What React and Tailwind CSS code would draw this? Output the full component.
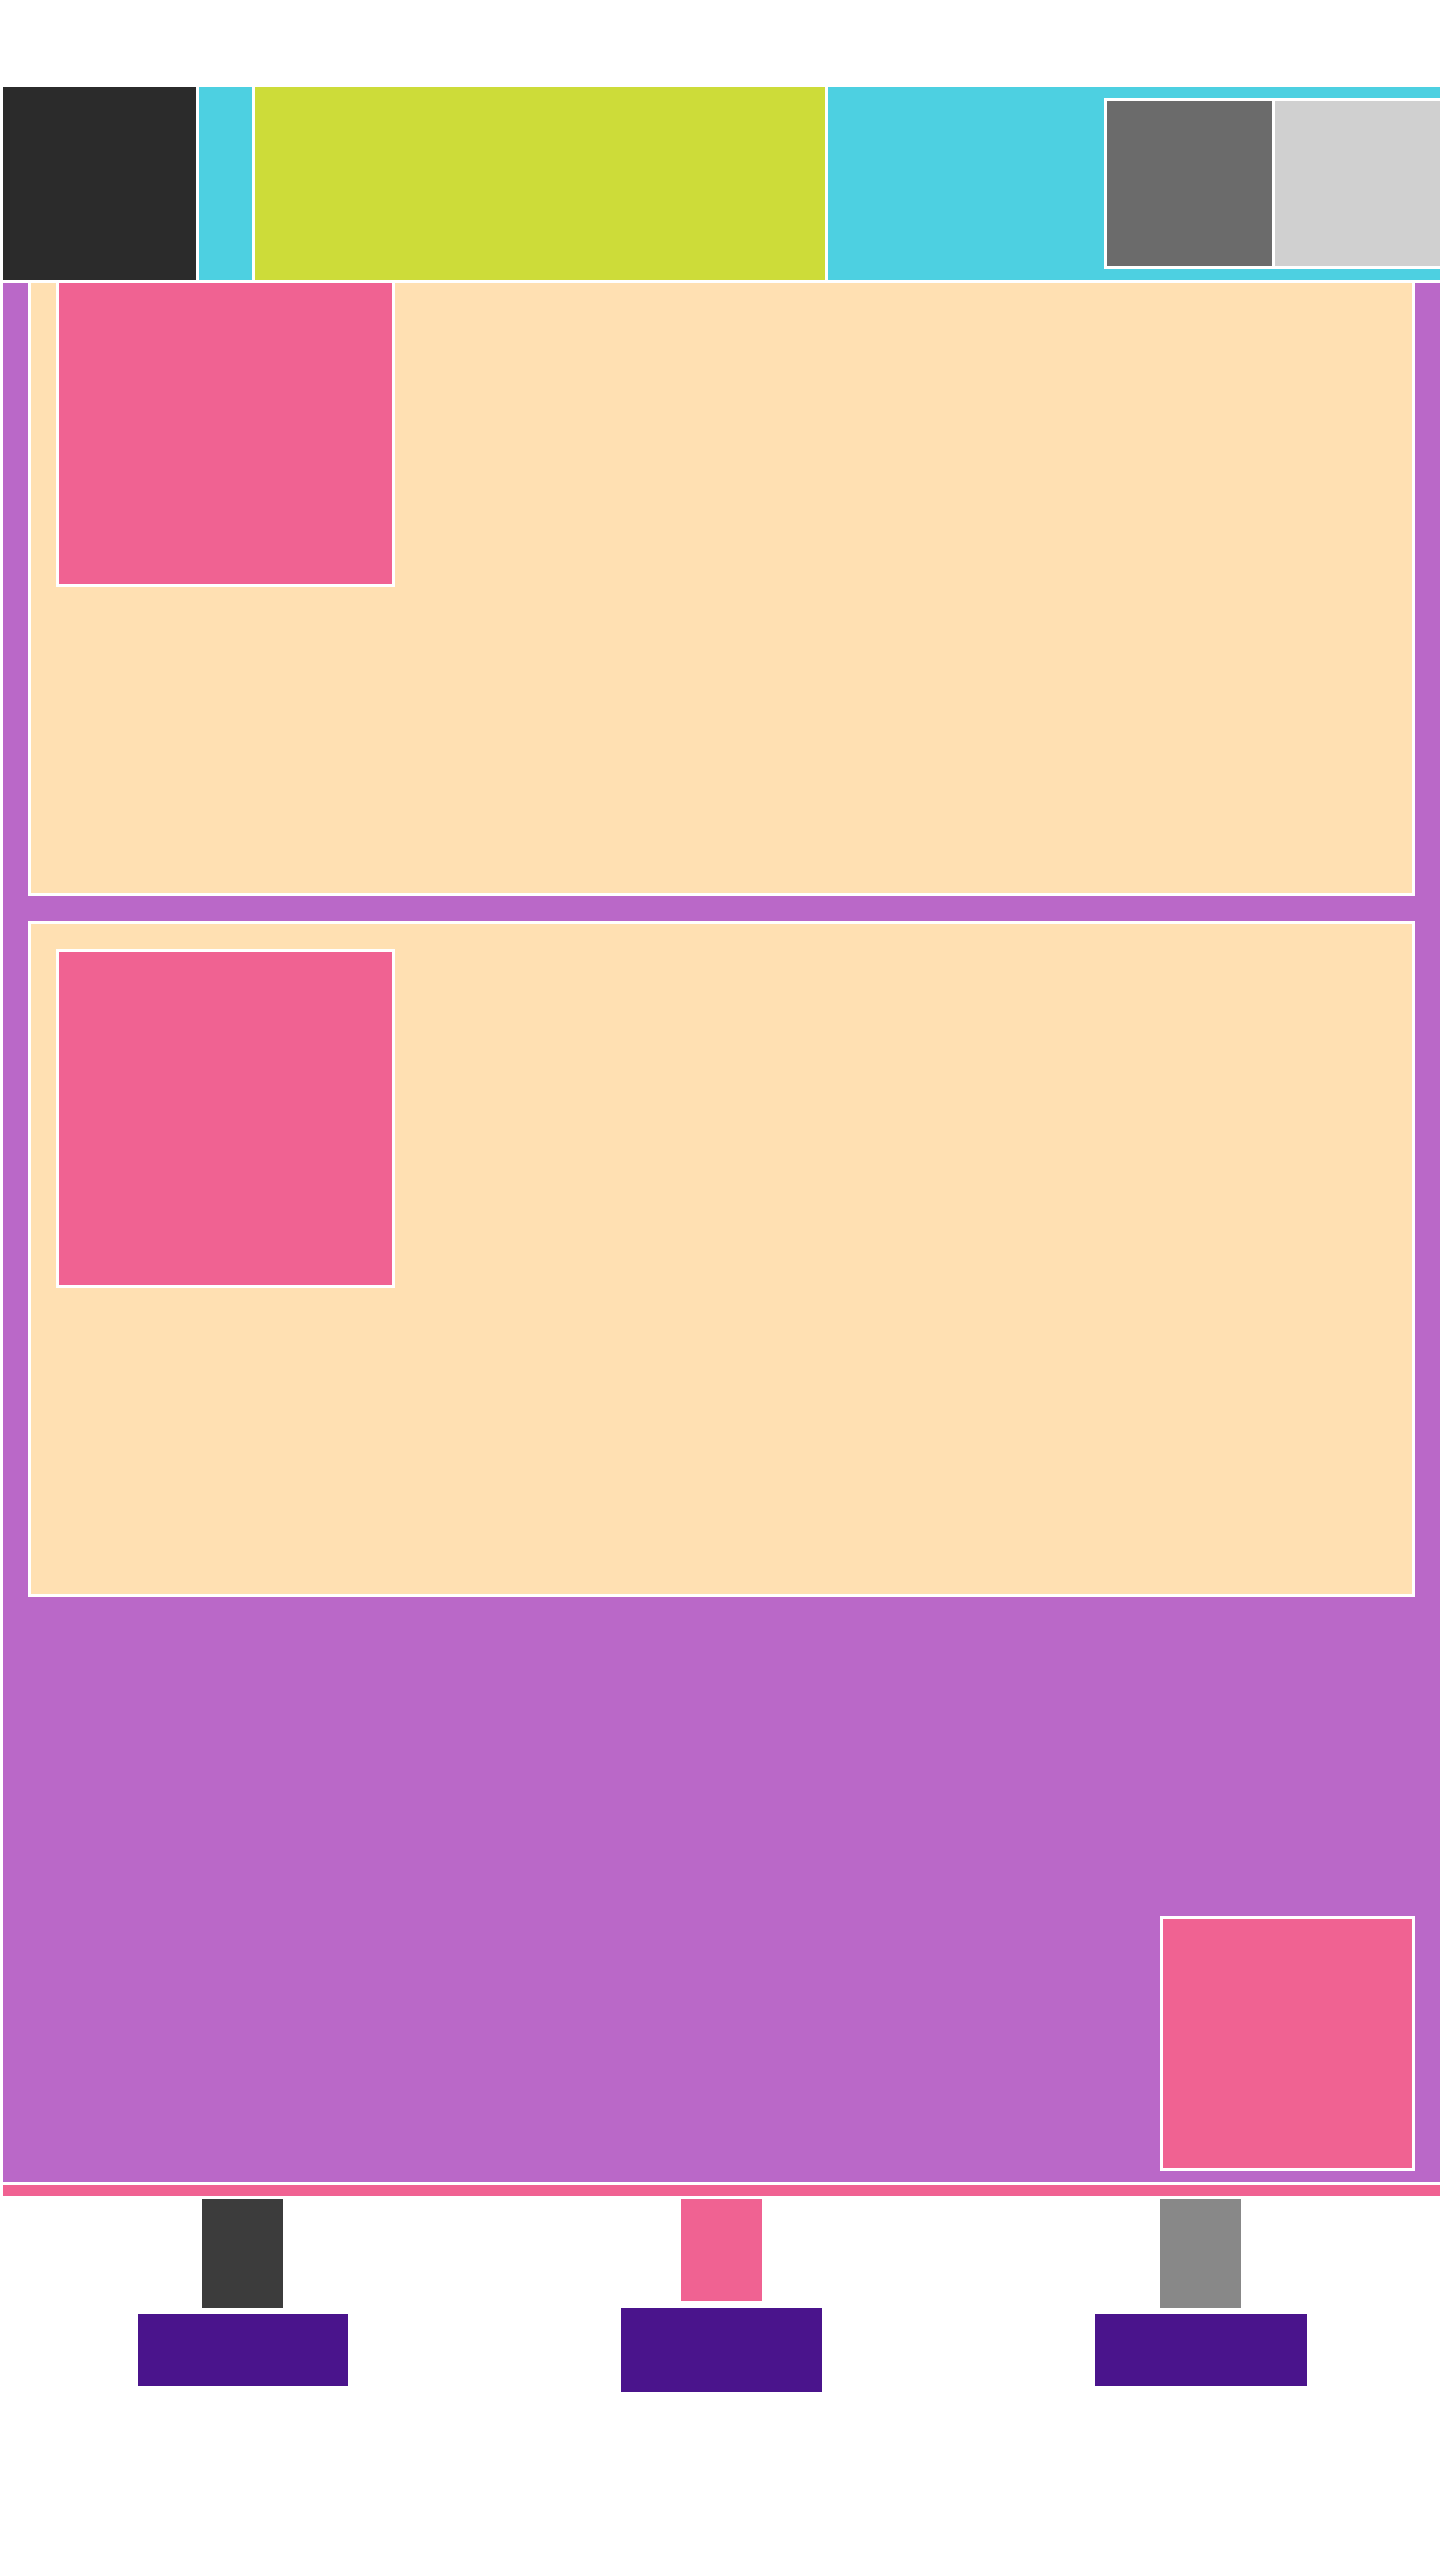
export default function App() {
  return (
    <div className="w-[1440px] min-h-[2560px] bg-white overflow-hidden">
      {/* Header bar (overlays the top of the content) */}
      <header className="relative z-10 mt-[84px] flex h-[199px] gap-[3px] bg-white py-[3px] pl-[3px]">
        <div className="w-[193px] shrink-0 bg-[#2b2b2b]" />
        <div className="w-[53px] shrink-0 bg-[#4dd0e1]" />
        <div className="w-[570px] shrink-0 bg-[#cddc39]" />
        <div className="flex w-[615px] shrink-0 bg-[#4dd0e1] py-[11px] pl-[276px]">
          <div className="flex shrink-0 gap-[3px] bg-white p-[3px]">
            <div className="h-[165px] w-[165px] bg-[#6b6b6b]" />
            <div className="h-[165px] w-[165px] bg-[#d0d0d0]" />
          </div>
        </div>
      </header>

      {/* Main content */}
      <main className="-mt-[88px] ml-[3px] flex w-[1437px] flex-col bg-[#ba68c8] px-[25px] pt-[25px] pb-[11px]">
        <div className="flex flex-col gap-[25px]">
          {[0, 1].map((i) => (
            <section
              key={i}
              className="h-[676px] w-[1387px] border-[3px] border-white bg-[#ffe0b2] p-[25px]"
            >
              <div className="h-[339px] w-[339px] border-[3px] border-white bg-[#f06292]" />
            </section>
          ))}
        </div>
        <div className="mt-[319px] h-[255px] w-[255px] self-end border-[3px] border-white bg-[#f06292]" />
      </main>

      {/* Footer */}
      <footer className="ml-[3px] mt-[3px]">
        <div className="h-[11px] bg-[#f06292]" />
        <div className="mt-[3px] grid grid-cols-3 items-start">
          <div className="flex flex-col items-center gap-[6px]">
            <div className="h-[109px] w-[81px] bg-[#3c3c3c]" />
            <div className="h-[72px] w-[210px] bg-[#4a148c]" />
          </div>
          <div className="flex flex-col items-center gap-[7px]">
            <div className="h-[102px] w-[81px] bg-[#f06292]" />
            <div className="h-[84px] w-[201px] bg-[#4a148c]" />
          </div>
          <div className="flex flex-col items-center gap-[6px]">
            <div className="h-[109px] w-[81px] bg-[#888888]" />
            <div className="h-[72px] w-[212px] bg-[#4a148c]" />
          </div>
        </div>
      </footer>
    </div>
  );
}
